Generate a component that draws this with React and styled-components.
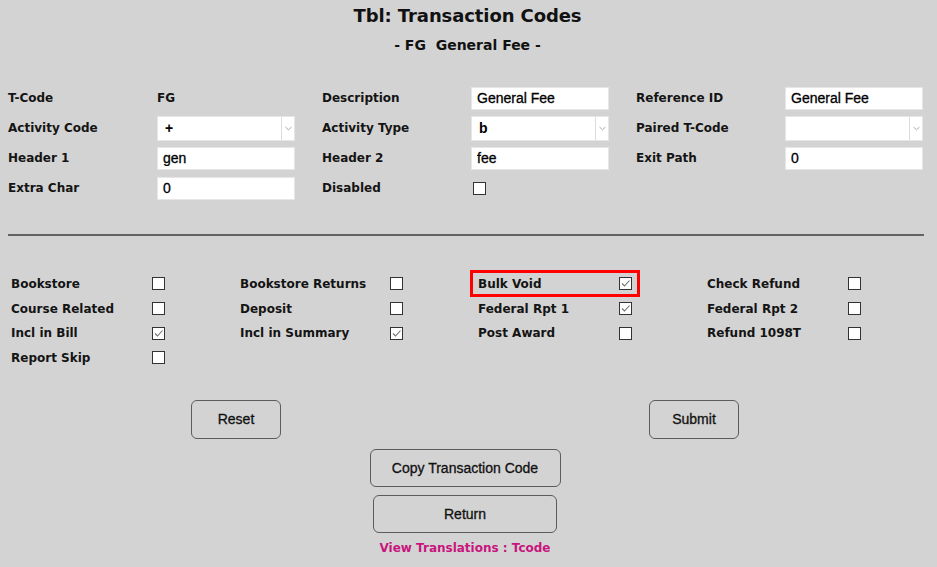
import React from "react"
import styled, { createGlobalStyle } from "styled-components"

const fields = [
  { label: "T-Code", kind: "text", value: "FG" },
  { label: "Description", kind: "input", value: "General Fee" },
  { label: "Reference ID", kind: "input", value: "General Fee" },
  { label: "Activity Code", kind: "select", value: "+" },
  { label: "Activity Type", kind: "select", value: "b" },
  { label: "Paired T-Code", kind: "select", value: "" },
  { label: "Header 1", kind: "input", value: "gen" },
  { label: "Header 2", kind: "input", value: "fee" },
  { label: "Exit Path", kind: "input", value: "0" },
  { label: "Extra Char", kind: "input", value: "0" },
  { label: "Disabled", kind: "check", value: false },
]

const flags = [
  { label: "Bookstore" },
  { label: "Bookstore Returns" },
  { label: "Bulk Void", checked: true, highlight: true },
  { label: "Check Refund" },
  { label: "Course Related" },
  { label: "Deposit" },
  { label: "Federal Rpt 1", checked: true },
  { label: "Federal Rpt 2" },
  { label: "Incl in Bill", checked: true },
  { label: "Incl in Summary", checked: true },
  { label: "Post Award" },
  { label: "Refund 1098T" },
  { label: "Report Skip" },
]

const Checkbox = ({ checked }) => (
  <Box>
    {checked && (
      <svg width="11" height="11" viewBox="0 0 11 11">
        <path d="M2 5.5 L4.5 8 L9.5 2.5" fill="none" stroke="#6f6f6f" strokeWidth="1.1" />
      </svg>
    )}
  </Box>
)

const FieldControl = ({ field }) => {
  if (field.kind === "text") return <Value>{field.value}</Value>
  if (field.kind === "check") return <CheckCell><Checkbox checked={field.value} /></CheckCell>
  if (field.kind === "select") {
    return (
      <Select>
        <SelectText>{field.value}</SelectText>
        <SelectArrow>
          <svg width="7" height="5" viewBox="0 0 7 5">
            <path d="M0.5 1 L3.5 3.8 L6.5 1" fill="none" stroke="#a8a8a8" strokeWidth="1" />
          </svg>
        </SelectArrow>
      </Select>
    )
  }
  return <TextInput defaultValue={field.value} readOnly />
}

const App = () => {
  return (
    <Page>
      <GlobalStyle />

      {/* Heading */}
      <Header>
        <Title>Tbl: Transaction Codes</Title>
        <Subtitle>- FG  General Fee -</Subtitle>
      </Header>

      {/* Main fields */}
      <FieldGrid>
        {fields.map((f) => (
          <Field key={f.label}>
            <Label>{f.label}</Label>
            <FieldControl field={f} />
          </Field>
        ))}
      </FieldGrid>

      <Divider />

      {/* Flags */}
      <FlagGrid>
        {flags.map((f, i) => (
          <Flag key={f.label} $labelWidth={i % 4 === 1 ? 150 : 141} $highlight={f.highlight}>
            <FlagLabel>{f.label}</FlagLabel>
            <Checkbox checked={f.checked} />
          </Flag>
        ))}
      </FlagGrid>

      {/* Buttons */}
      <Actions>
        <ButtonRow>
          <Button $width={90} $height={39}>Reset</Button>
          <Button $width={90} $height={39}>Submit</Button>
        </ButtonRow>
        <Button $width={191} $height={38} $gap={10}>Copy Transaction Code</Button>
        <Button $width={184} $height={38} $gap={8}>Return</Button>
        <TranslationLink href="#">View Translations : Tcode</TranslationLink>
      </Actions>
    </Page>
  )
}

const GlobalStyle = createGlobalStyle`
  html, body {
    margin: 0;
    padding: 0;
    background: #d3d3d3;
  }
  *, *::before, *::after {
    box-sizing: border-box;
  }
`

const Page = styled.div`
  width: 937px;
  height: 567px;
  background: #d3d3d3;
  color: #111;
  font-family: "DejaVu Sans", sans-serif;
  overflow: hidden;
`

const Header = styled.header`
  padding-top: 5px;
  display: flex;
  flex-direction: column;
  align-items: center;
  padding-right: 2px;
`

const Title = styled.h1`
  margin: 0;
  font-size: 18px;
  line-height: 22px;
  font-weight: bold;
  letter-spacing: -0.1px;
`

const Subtitle = styled.div`
  margin-top: 9px;
  font-size: 14px;
  line-height: 18px;
  font-weight: bold;
  white-space: pre;
`

const FieldGrid = styled.div`
  margin-top: 29px;
  padding-left: 8px;
  display: grid;
  grid-template-columns: repeat(3, 287px);
  grid-auto-rows: 30px;
  column-gap: 27px;
`

const Field = styled.div`
  display: grid;
  grid-template-columns: 149px 138px;
  align-items: center;
`

const Label = styled.span`
  font-size: 12px;
  font-weight: bold;
  color: #141414;
`

const Value = styled.span`
  font-size: 12px;
  font-weight: bold;
  color: #141414;
`

const TextInput = styled.input`
  width: 138px;
  height: 23px;
  border: 1px solid #e6e6e6;
  background: #fff;
  padding: 0 0 0 5px;
  margin: 0;
  font-family: "Liberation Sans", Arial, sans-serif;
  font-size: 14px;
  color: #000;
  -webkit-text-stroke: 0.3px #000;
  outline: none;
`

const Select = styled.div`
  width: 138px;
  height: 25px;
  display: flex;
  background: #fff;
  border: 1px solid #e6e6e6;
`

const SelectText = styled.span`
  flex: 1;
  padding-left: 7px;
  display: flex;
  align-items: center;
  font-family: "Liberation Sans", Arial, sans-serif;
  font-size: 14px;
  font-weight: bold;
  color: #000;
`

const SelectArrow = styled.span`
  width: 13px;
  border-left: 1px solid #dcdcdc;
  display: flex;
  align-items: center;
  justify-content: center;
`

const CheckCell = styled.span`
  display: flex;
  padding-left: 2px;
`

const Box = styled.span`
  width: 13px;
  height: 13px;
  border: 1px solid #333;
  background: #fff;
  display: flex;
  align-items: center;
  justify-content: center;
`

const Divider = styled.hr`
  margin: 31px 13px 0 8px;
  height: 2px;
  border: none;
  background: #626262;
`

const FlagGrid = styled.div`
  margin-top: 35.5px;
  padding-left: 11px;
  display: grid;
  grid-template-columns: 229px 238px 229px 229px;
  grid-auto-rows: 24.7px;
`

const Flag = styled.div`
  position: relative;
  display: grid;
  grid-template-columns: ${(p) => p.$labelWidth}px 13px;
  align-items: center;

  &::after {
    content: "";
    display: ${(p) => (p.$highlight ? "block" : "none")};
    position: absolute;
    left: -8px;
    top: -1.6px;
    width: 170px;
    height: 27px;
    border: 3px solid #f00;
  }
`

const FlagLabel = styled.span`
  font-size: 12px;
  font-weight: bold;
  color: #141414;
`

const Actions = styled.div`
  width: 930px;
  margin-top: 29.5px;
  display: flex;
  flex-direction: column;
  align-items: center;
`

const ButtonRow = styled.div`
  width: 548px;
  display: flex;
  justify-content: space-between;
`

const Button = styled.button`
  width: ${(p) => p.$width}px;
  height: ${(p) => p.$height}px;
  margin-top: ${(p) => p.$gap || 0}px;
  border: 1px solid #5c5c5c;
  border-radius: 6px;
  background: transparent;
  font-family: "Liberation Sans", Arial, sans-serif;
  font-size: 14px;
  color: #111;
  -webkit-text-stroke: 0.3px #111;
  padding: 0;
`

const TranslationLink = styled.a`
  margin-top: 8px;
  font-size: 12px;
  font-weight: bold;
  color: #c8157e;
  text-decoration: none;
`

export default App
